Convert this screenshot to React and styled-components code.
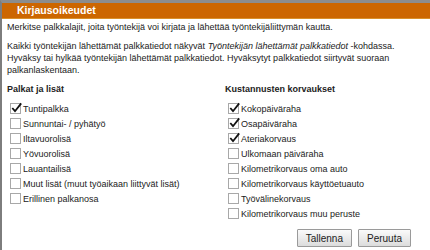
import React from "react";
import styled, { createGlobalStyle } from "styled-components";

const Global = createGlobalStyle`
  html, body { margin: 0; padding: 0; background: #ffffff; }
  body { font-family: "Liberation Sans", Arial, sans-serif; }
`;

const Dialog = styled.div`
  width: 430px;
  height: 250px;
  box-sizing: border-box;
  border-top: 3px solid #8c8c8c;
  border-left: 2px solid #7d7d7d;
  background: #fff;
  display: flex;
  flex-direction: column;
  overflow: hidden;
`;

const TitleBar = styled.div`
  height: 15px;
  background: #cc6600;
  border-bottom: 1px solid #d9902a;
  color: #fff;
  font-weight: bold;
  font-size: 10.5px;
  line-height: 15px;
  padding-left: 15px;
`;

const Body = styled.div`
  padding: 2px 0 0 5px;
  color: #222;
  font-size: 9px;
  line-height: 12px;
  display: flex;
  flex-direction: column;
`;

const Para = styled.p`
  margin: 0 0 ${(p) => p.$gap || 0}px 0;
`;

const Columns = styled.div`
  display: grid;
  grid-template-columns: 218px 1fr;
  margin-top: 7px;
`;

const Column = styled.div`
  display: flex;
  flex-direction: column;
`;

const Heading = styled.div`
  font-weight: bold;
  font-size: 9px;
  line-height: 12px;
  margin-bottom: 6px;
`;

const Row = styled.label`
  display: flex;
  align-items: center;
  height: 15px;
  padding-left: 3px;
  gap: 2px;
`;

const Box = styled.span`
  width: 9px;
  height: 9px;
  border: 1px solid #a8a8a8;
  background: #fff;
  box-sizing: content-box;
  position: relative;
  flex: none;
`;

const Check = styled.svg`
  position: absolute;
  left: 0px;
  top: -2px;
  width: 11px;
  height: 11px;
`;

const Buttons = styled.div`
  display: flex;
  justify-content: flex-end;
  gap: 6px;
  padding-right: 19px;
  margin-top: 8px;
`;

const Button = styled.button`
  height: 18px;
  padding: 0 8px;
  font-family: "Liberation Sans", Arial, sans-serif;
  font-size: 10px;
  color: #222;
  border: 1px solid #9a9a9a;
  border-radius: 1px;
  background: linear-gradient(#fafafa, #dcdcdc);
`;

const Check1 = ({ checked, label }) => (
  <Row>
    <Box>
      {checked && (
        <Check viewBox="0 0 11 11">
          <path d="M1.3 6 L4 9.2 L10.2 1.4" stroke="#111" strokeWidth="1.8" fill="none" />
        </Check>
      )}
    </Box>
    <span>{label}</span>
  </Row>
);

const left = [
  ["Tuntipalkka", true],
  ["Sunnuntai- / pyhätyö", false],
  ["Iltavuorolisä", false],
  ["Yövuorolisä", false],
  ["Lauantailisä", false],
  ["Muut lisät (muut työaikaan liittyvät lisät)", false],
  ["Erillinen palkanosa", false],
];

const right = [
  ["Kokopäiväraha", true],
  ["Osapäiväraha", true],
  ["Ateriakorvaus", true],
  ["Ulkomaan päiväraha", false],
  ["Kilometrikorvaus oma auto", false],
  ["Kilometrikorvaus käyttöetuauto", false],
  ["Työvälinekorvaus", false],
  ["Kilometrikorvaus muu peruste", false],
];

export default function App() {
  return (
    <>
      <Global />
      <Dialog>
        <TitleBar>Kirjausoikeudet</TitleBar>
        <Body>
          <Para $gap={7}>
            Merkitse palkkalajit, joita työntekijä voi kirjata ja lähettää työntekijäliittymän kautta.
          </Para>
          <Para>
            Kaikki työntekijän lähettämät palkkatiedot näkyvät <i>Työntekijän lähettämät palkkatiedot</i> -kohdassa.
            <br />
            Hyväksy tai hylkää työntekijän lähettämät palkkatiedot. Hyväksytyt palkkatiedot siirtyvät suoraan
            <br />
            palkanlaskentaan.
          </Para>
          <Columns>
            <Column>
              <Heading>Palkat ja lisät</Heading>
              {left.map(([l, c]) => (
                <Check1 key={l} label={l} checked={c} />
              ))}
            </Column>
            <Column>
              <Heading>Kustannusten korvaukset</Heading>
              {right.map(([l, c]) => (
                <Check1 key={l} label={l} checked={c} />
              ))}
            </Column>
          </Columns>
          <Buttons>
            <Button>Tallenna</Button>
            <Button>Peruuta</Button>
          </Buttons>
        </Body>
      </Dialog>
    </>
  );
}
